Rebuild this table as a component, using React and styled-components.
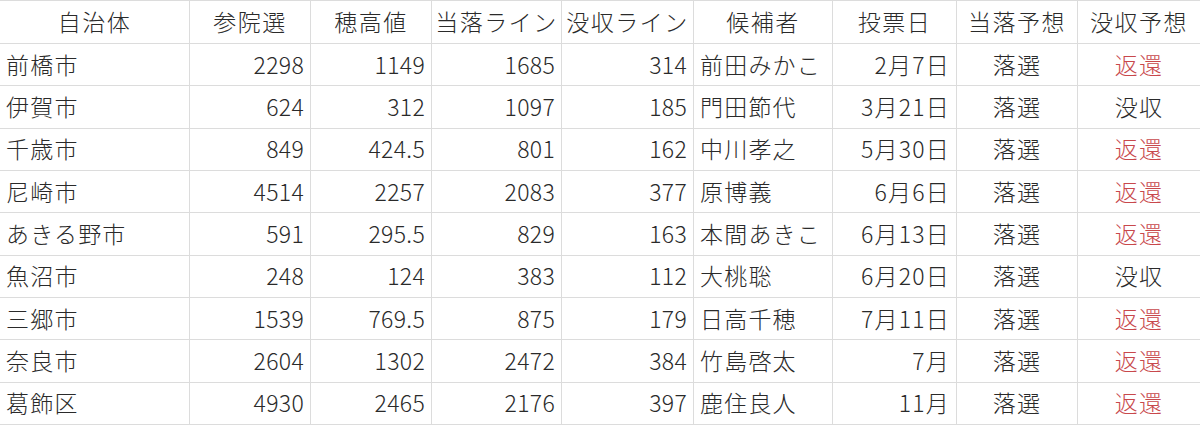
import React from 'react';
import styled, { createGlobalStyle } from 'styled-components';

const columns = [
  { title: '自治体', width: 190, align: 'left' },
  { title: '参院選', width: 121, align: 'right' },
  { title: '穂高値', width: 121, align: 'right' },
  { title: '当落ライン', width: 130, align: 'right' },
  { title: '没収ライン', width: 132, align: 'right' },
  { title: '候補者', width: 139, align: 'left' },
  { title: '投票日', width: 124, align: 'right' },
  { title: '当落予想', width: 121, align: 'center' },
  { title: '没収予想', width: 122, align: 'center' },
];

const rows = [
  ['前橋市', '2298', '1149', '1685', '314', '前田みかこ', '2月7日', '落選', '返還'],
  ['伊賀市', '624', '312', '1097', '185', '門田節代', '3月21日', '落選', '没収'],
  ['千歳市', '849', '424.5', '801', '162', '中川孝之', '5月30日', '落選', '返還'],
  ['尼崎市', '4514', '2257', '2083', '377', '原博義', '6月6日', '落選', '返還'],
  ['あきる野市', '591', '295.5', '829', '163', '本間あきこ', '6月13日', '落選', '返還'],
  ['魚沼市', '248', '124', '383', '112', '大桃聡', '6月20日', '落選', '没収'],
  ['三郷市', '1539', '769.5', '875', '179', '日高千穂', '7月11日', '落選', '返還'],
  ['奈良市', '2604', '1302', '2472', '384', '竹島啓太', '7月', '落選', '返還'],
  ['葛飾区', '4930', '2465', '2176', '397', '鹿住良人', '11月', '落選', '返還'],
];

const GlobalStyle = createGlobalStyle`
  body {
    margin: 0;
    background: #ffffff;
    font-family: "Noto Sans CJK JP", "Noto Sans", sans-serif;
  }
`;

const Sheet = styled.div`
  display: grid;
  grid-template-columns: ${columns.map((c) => `${c.width}px`).join(' ')};
  grid-template-rows: 43px repeat(9, 42.35px);
  width: 1200px;
  height: 426px;
  border-top: 1px solid #dcdcdc;
  box-sizing: border-box;
  color: #2a2a2a;
  font-size: 23px;
  font-weight: 300;
`;

const Cell = styled.div`
  display: flex;
  align-items: center;
  justify-content: ${(props) =>
    props.align === 'right' ? 'flex-end' : props.align === 'center' ? 'center' : 'flex-start'};
  padding: 0 6px 1px 6px;
  border-right: ${(props) => (props.last ? 'none' : '1px solid #dcdcdc')};
  border-bottom: 1px solid #dcdcdc;
  box-sizing: border-box;
  white-space: nowrap;
  letter-spacing: ${(props) => (props.numeric ? '0.3px' : '1.2px')};
  color: ${(props) => (props.red ? '#c8484c' : '#2a2a2a')};
  line-height: 1;
`;

const HeaderCell = styled(Cell)`
  justify-content: center;
  letter-spacing: 1.5px;
`;

const isNumeric = (value) => /^[0-9.]+$/.test(value);

const App = () => (
  <>
    <GlobalStyle />
    <Sheet>
      {columns.map((col, i) => (
        <HeaderCell key={col.title} last={i === columns.length - 1}>
          {col.title}
        </HeaderCell>
      ))}
      {rows.map((row) =>
        row.map((value, i) => (
          <Cell
            key={`${row[0]}-${i}`}
            align={columns[i].align}
            numeric={isNumeric(value)}
            red={value === '返還'}
            last={i === columns.length - 1}
          >
            {value}
          </Cell>
        ))
      )}
    </Sheet>
  </>
);

export default App;
